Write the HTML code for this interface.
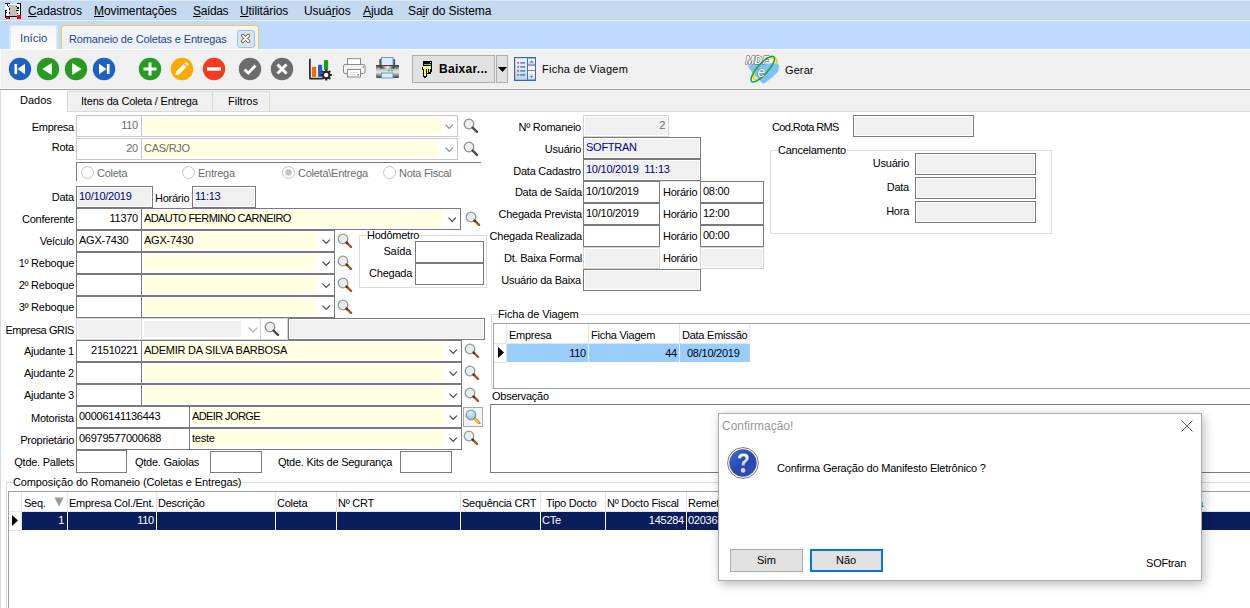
<!DOCTYPE html><html><head><meta charset="utf-8"><style>
*{margin:0;padding:0;box-sizing:border-box}
html,body{width:1250px;height:608px;overflow:hidden}
body{position:relative;background:#fff;font-family:"Liberation Sans",sans-serif;font-size:11px;color:#000;letter-spacing:-0.25px}
.a{position:absolute}
.l,.t{white-space:nowrap}
.bt{position:absolute;top:-1px;white-space:pre}
.tb{border:1px solid #7A7A7A;background:#fff}
.dis{border:1px solid #C8C8C8;background:#fff;color:#6D6D6D}
.ro{border:1px solid #7A7A7A;background:#F0F0F0;box-shadow:inset 0 0 0 1px #fff;color:#000080}
.dis2{border:1px solid #D4D4D4;background:#F0F0F0;box-shadow:inset 0 0 0 1px #fff;color:#6D6D6D}
</style></head><body>
<div class="a" style="left:0px;top:0px;width:1250px;height:19px;background:#C5D9F0"></div>
<div class="a" style="left:0px;top:0px;width:1250px;height:1px;background:#D8E6F5"></div>
<div class="a" style="left:0px;top:19px;width:1250px;height:1px;background:#BBD4EE"></div>
<div class="a" style="left:0px;top:20px;width:1250px;height:1px;background:#EEF0F3"></div>
<div class="a" style="left:0px;top:21px;width:1250px;height:28px;background:#BEDAFE"></div>
<div class="a" style="left:0px;top:49px;width:1250px;height:1px;background:#FCFCFC"></div>
<svg class="a" style="left:5px;top:3px" width="16" height="16" viewBox="0 0 16 16" shape-rendering="crispEdges"><rect x="0" y="1" width="16" height="12" fill="#fff"/><rect x="4" y="2" width="8" height="11" fill="#C0C0C0"/><rect x="0" y="0" width="5" height="1" fill="#000"/><rect x="1" y="0" width="3" height="1" fill="#0000FF"/><rect x="12" y="0" width="4" height="1" fill="#000"/><rect x="13" y="0" width="2" height="1" fill="#0000FF"/><rect x="15" y="1" width="1" height="12" fill="#000"/><rect x="0" y="7" width="1" height="6" fill="#000"/><rect x="2" y="1" width="1" height="2" fill="#000"/><rect x="3" y="3" width="1" height="1" fill="#000"/><rect x="4" y="5" width="1" height="2" fill="#000"/><rect x="4" y="9" width="1" height="2" fill="#000"/><rect x="1" y="7" width="1" height="1" fill="#000"/><rect x="1" y="9" width="1" height="1" fill="#000"/><rect x="11" y="3" width="1" height="1" fill="#000"/><rect x="12" y="4" width="2" height="2" fill="#000"/><rect x="11" y="7" width="3" height="1" fill="#000"/><rect x="12" y="10" width="1" height="1" fill="#000"/><rect x="0" y="13" width="16" height="1" fill="#000"/><rect x="1" y="14" width="3" height="2" fill="#FF0000"/><rect x="12" y="12" width="4" height="4" fill="#FF0000"/><rect x="0" y="14" width="1" height="1" fill="#000"/><rect x="4" y="14" width="1" height="2" fill="#000"/></svg>
<div class="a t" style="left:28px;top:4px;height:15px;line-height:15px;font-size:12px;letter-spacing:-0.1px;color:#000"><u>C</u>adastros</div>
<div class="a t" style="left:94px;top:4px;height:15px;line-height:15px;font-size:12px;letter-spacing:-0.1px;color:#000"><u>M</u>ovimentações</div>
<div class="a t" style="left:193px;top:4px;height:15px;line-height:15px;font-size:12px;letter-spacing:-0.35px;color:#000"><u>S</u>aídas</div>
<div class="a t" style="left:240px;top:4px;height:15px;line-height:15px;font-size:12px;letter-spacing:-0.1px;color:#000"><u>U</u>tilitários</div>
<div class="a t" style="left:304px;top:4px;height:15px;line-height:15px;font-size:12px;letter-spacing:-0.1px;color:#000">Usuá<u>r</u>ios</div>
<div class="a t" style="left:363px;top:4px;height:15px;line-height:15px;font-size:12px;letter-spacing:-0.1px;color:#000"><u>A</u>juda</div>
<div class="a t" style="left:408px;top:4px;height:15px;line-height:15px;font-size:12px;letter-spacing:-0.1px;color:#000">Sa<u>i</u>r do Sistema</div>
<div class="a" style="left:9px;top:25px;width:49px;height:24px;border:1px solid #D8E6F5;border-bottom:none;border-radius:3px 3px 0 0;background:linear-gradient(#F4F4F4,#FFFFFF)"></div>
<div class="a" style="left:10px;top:26px;width:1px;height:23px;background:#C8F0FF"></div>
<div class="a" style="left:56px;top:26px;width:1px;height:23px;background:#C8F0FF"></div>
<div class="a t" style="left:20px;top:31px;height:15px;line-height:15px;font-size:11.5px;color:#2B3E8C;letter-spacing:0">Início</div>
<div class="a" style="left:61px;top:25px;width:198px;height:24px;border:1px solid #F5C65A;border-bottom:none;border-radius:3px 3px 0 0;background:linear-gradient(#F2F5FA,#E9F0FA);box-shadow:inset 1px 1px 0 #FFF8C0,inset -1px 0 0 #FFF8C0"></div>
<div class="a t" style="left:69px;top:32px;height:15px;line-height:15px;font-size:11px;color:#2B3E8C;letter-spacing:-0.15px">Romaneio de Coletas e Entregas</div>
<div class="a" style="left:237px;top:30px;width:18px;height:18px;border:1px solid #A2C0E4;border-radius:3px;background:#D4E3F5"></div>
<svg class="a" style="left:240px;top:33px" width="12" height="12" viewBox="0 0 12 12"><path d="M2.8 2.6L8.4 8.2M8.4 2.6L2.8 8.2" stroke="#6E5C1E" stroke-width="3.6" stroke-linecap="round"/><path d="M2.8 2.6L8.4 8.2M8.4 2.6L2.8 8.2" stroke="#FFFFFF" stroke-width="2" stroke-linecap="round"/></svg>
<div class="a" style="left:0px;top:50px;width:1250px;height:38px;background:#F0F0F0"></div>
<div class="a" style="left:0px;top:50px;width:1px;height:38px;background:#FAFAFA"></div>
<div class="a" style="left:0px;top:88px;width:1250px;height:1px;background:#FAFAFA"></div>
<div class="a" style="left:0px;top:89px;width:1250px;height:1px;background:#A0A0A0"></div>
<div class="a" style="left:0px;top:90px;width:1250px;height:1px;background:#F8F8F8"></div>
<svg class="a" style="left:8px;top:57px" width="24" height="24" viewBox="0 0 24 24"><circle cx="12" cy="12" r="11.2" fill="#1C62C0"/><rect x="6.5" y="7" width="2.6" height="10" fill="#fff"/><path d="M9.5 12 L17 6.8 V17.2Z" fill="#fff"/></svg>
<svg class="a" style="left:36px;top:57px" width="24" height="24" viewBox="0 0 24 24"><circle cx="12" cy="12" r="11.2" fill="#279A22"/><path d="M6.3 12 L15.8 6 V18Z" fill="#fff"/></svg>
<svg class="a" style="left:64px;top:57px" width="24" height="24" viewBox="0 0 24 24"><circle cx="12" cy="12" r="11.2" fill="#279A22"/><path d="M17.7 12 L8.2 6 V18Z" fill="#fff"/></svg>
<svg class="a" style="left:92px;top:57px" width="24" height="24" viewBox="0 0 24 24"><circle cx="12" cy="12" r="11.2" fill="#1C62C0"/><rect x="14.9" y="7" width="2.6" height="10" fill="#fff"/><path d="M14.5 12 L7 6.8 V17.2Z" fill="#fff"/></svg>
<svg class="a" style="left:138px;top:57px" width="24" height="24" viewBox="0 0 24 24"><circle cx="12" cy="12" r="11.2" fill="#259B24"/><rect x="10.5" y="5.5" width="3" height="13" fill="#fff"/><rect x="5.5" y="10.5" width="13" height="3" fill="#fff"/></svg>
<svg class="a" style="left:170px;top:57px" width="24" height="24" viewBox="0 0 24 24"><circle cx="12" cy="12" r="11.2" fill="#FFA900"/><path d="M5.3 18.2 L6.3 14.6 L13.6 7.3 L16.4 10.1 L9.1 17.4Z" fill="#fff"/><path d="M14.6 6.3 L16.2 4.7 L19 7.5 L17.4 9.1Z" fill="#fff"/></svg>
<svg class="a" style="left:202px;top:57px" width="24" height="24" viewBox="0 0 24 24"><circle cx="12" cy="12" r="11.2" fill="#F43B1D"/><rect x="5" y="10.3" width="14" height="3.4" fill="#fff"/></svg>
<svg class="a" style="left:238px;top:57px" width="24" height="24" viewBox="0 0 24 24"><circle cx="12" cy="12" r="11.2" fill="#6C6C6C"/><path d="M6.5 12.5 L10.3 16 L17.5 8.5" fill="none" stroke="#fff" stroke-width="2.8"/></svg>
<svg class="a" style="left:270px;top:57px" width="24" height="24" viewBox="0 0 24 24"><circle cx="12" cy="12" r="11.2" fill="#6C6C6C"/><path d="M7.5 7.5 L16.5 16.5 M16.5 7.5 L7.5 16.5" fill="none" stroke="#fff" stroke-width="3"/></svg>
<svg class="a" style="left:308px;top:58px" width="26" height="24" viewBox="0 0 26 24"><path d="M1.9 0.7 V20.6 H14" fill="none" stroke="#262626" stroke-width="1.7" stroke-linejoin="round"/><rect x="4" y="8.8" width="4.2" height="10.2" rx="1" fill="#FF6600"/><rect x="10" y="6.8" width="4.2" height="12.2" rx="1" fill="#1C62C8"/><rect x="16" y="2" width="4.2" height="10" rx="1" fill="#229A22"/><g transform="translate(18.2 17)"><circle r="4.2" fill="#262626"/><path d="M0 -5.6V5.6M-5.6 0H5.6M-4 -4L4 4M4 -4L-4 4" stroke="#262626" stroke-width="2.2"/><circle r="2.2" fill="#fff"/></g></svg>
<svg class="a" style="left:343px;top:58px" width="23" height="20" viewBox="0 0 23 20"><path d="M3 6.5 L4.5 5 H17.5 L19 6.5" fill="#999"/><rect x="4.5" y="0.7" width="13" height="6" fill="#fff" stroke="#8A8A8A"/><rect x="0.5" y="6.5" width="21.5" height="9" rx="1.6" fill="#F2F2F2" stroke="#8A8A8A"/><rect x="4.5" y="11.5" width="13" height="7.5" fill="#fff" stroke="#8A8A8A"/><path d="M7 14.5h8M6 16.5h6" stroke="#D8D8D8" stroke-width=".8"/><rect x="14.5" y="16" width="1.5" height="1.5" fill="#B04A90"/><rect x="19.5" y="8" width="1.5" height="1.5" fill="#F46A50"/></svg>
<svg class="a" style="left:376px;top:57px" width="23" height="22" viewBox="0 0 23 22"><defs><linearGradient id="pg" x1="0" y1="0" x2="0" y2="1"><stop offset="0" stop-color="#3A3A3A"/><stop offset="0.12" stop-color="#555"/><stop offset="0.3" stop-color="#B8B8B8"/><stop offset="0.55" stop-color="#E8E8E8"/><stop offset="0.8" stop-color="#8A8A8A"/><stop offset="1" stop-color="#3A3A3A"/></linearGradient><linearGradient id="sg" x1="0" y1="0" x2="1" y2="0"><stop offset="0" stop-color="#333"/><stop offset="0.5" stop-color="#EEE"/><stop offset="1" stop-color="#333"/></linearGradient></defs><rect x="3.2" y="2" width="16" height="7" rx="1" fill="#5A5A5A"/><rect x="5.5" y="0.5" width="11.5" height="8" fill="#DDEAF7" stroke="#6A9AD0"/><rect x="0" y="8" width="23" height="13" rx="1.5" fill="url(#pg)"/><rect x="0" y="8" width="23" height="1" fill="#444"/><rect x="4.5" y="9" width="14" height="2.8" fill="url(#sg)"/><rect x="12" y="13" width="2" height="1.3" fill="#2D2"/><rect x="15" y="13" width="2" height="1.3" fill="#2D2"/><rect x="20" y="10.5" width="1.5" height="1" fill="#666"/><rect x="5.5" y="16" width="11.5" height="5" fill="#DDEAF7" stroke="#6A9AD0"/></svg>
<div class="a" style="left:412px;top:55px;width:83px;height:28px;border:1px solid #ADADAD;background:#E1E1E1"></div>
<div class="a" style="left:496px;top:55px;width:12px;height:28px;border:1px solid #ADADAD;background:#E1E1E1"></div>
<svg class="a" style="left:498px;top:67px" width="9" height="5" viewBox="0 0 9 5"><path d="M0 0H9L4.5 5Z" fill="#000"/></svg>
<svg class="a" style="left:422px;top:61px" width="11" height="17" viewBox="0 0 11 17" shape-rendering="crispEdges"><rect x="1" y="0" width="9" height="5" fill="#000"/><rect x="2" y="3" width="7" height="1" fill="#19DDE8"/><rect x="8" y="1" width="1" height="1" fill="#FFF000"/><rect x="0" y="5" width="10" height="8" fill="#000"/><rect x="1" y="8" width="4" height="9" fill="#000"/><rect x="1" y="5" width="8" height="3" fill="#FFF24A"/><rect x="1" y="6" width="1" height="2" fill="#FFF24A"/><rect x="2" y="8" width="2" height="7" fill="#FFF24A"/><rect x="5" y="8" width="1" height="4" fill="#FFF24A"/><rect x="7" y="8" width="1" height="3" fill="#FFF24A"/><rect x="3" y="6" width="1" height="1" fill="#fff"/><rect x="5" y="6" width="1" height="1" fill="#fff"/><rect x="7" y="6" width="1" height="1" fill="#fff"/><rect x="2" y="10" width="1" height="1" fill="#fff"/><rect x="3" y="12" width="1" height="1" fill="#fff"/><rect x="0" y="5" width="1" height="1" fill="#E1E1E1"/><rect x="0" y="9" width="1" height="8" fill="#E1E1E1"/><rect x="5" y="13" width="5" height="4" fill="#E1E1E1"/><rect x="9" y="11" width="1" height="2" fill="#E1E1E1"/><rect x="1" y="16" width="1" height="1" fill="#E1E1E1"/><rect x="4" y="16" width="1" height="1" fill="#E1E1E1"/></svg>
<div class="a t" style="left:439px;top:62px;height:14px;line-height:14px;font-size:12px;font-weight:bold;letter-spacing:0.3px">Baixar...</div>
<svg class="a" style="left:514px;top:57px" width="22" height="24" viewBox="0 0 22 24"><defs><linearGradient id="fg" x1="0" y1="0" x2="0" y2="1"><stop offset="0" stop-color="#F2F7FC"/><stop offset="1" stop-color="#BCD4EE"/></linearGradient><linearGradient id="bg2" x1="0" y1="0" x2="0" y2="1"><stop offset="0" stop-color="#FFFFFF"/><stop offset="1" stop-color="#C8CED6"/></linearGradient></defs><rect x="0.6" y="0.6" width="20.8" height="22.8" fill="url(#fg)" stroke="#3A66A8" stroke-width="1.2"/><rect x="13" y="0.6" width="8.4" height="22.8" fill="#4C72AC"/><rect x="14" y="1.6" width="7" height="6" fill="url(#bg2)"/><rect x="14" y="8.6" width="7" height="4.6" fill="#F4F4F4"/><rect x="14" y="14" width="7" height="3" fill="#F4F4F4"/><rect x="14" y="17.2" width="7" height="5.4" fill="url(#bg2)"/><path d="M15.8 5.6 L17.5 3.6 L19.2 5.6Z" fill="#3A66A8"/><path d="M15.8 18.8 L17.5 20.8 L19.2 18.8Z" fill="#3A66A8"/><g fill="#E02828"><rect x="3" y="5.2" width="2.2" height="1.4" rx=".6"/><rect x="3" y="9.2" width="2.2" height="1.4" rx=".6"/><rect x="3" y="13.2" width="2.2" height="1.4" rx=".6"/><rect x="3" y="17.2" width="2.2" height="1.4" rx=".6"/></g><g fill="#3A64A8"><rect x="6.2" y="5.3" width="5" height="1.2"/><rect x="6.2" y="9.3" width="5" height="1.2"/><rect x="6.2" y="13.3" width="5" height="1.2"/><rect x="6.2" y="17.3" width="5" height="1.2"/></g></svg>
<div class="a t" style="left:542px;top:61px;height:16px;line-height:16px;font-size:11px;letter-spacing:0.25px">Ficha de Viagem</div>
<svg class="a" style="left:745px;top:55px" width="36" height="31" viewBox="0 0 36 31"><path d="M2.9 10.5 L14.5 8.7 L32.4 8.3 L34.2 10.5 L33.2 16.6 L27.4 22.3 L20.2 28.1 L18 28.8 L14.5 25.2 L8 18.7 L4.4 13.7Z" fill="#7CC3F2"/><path d="M25.5 3.2 Q33 1.5 31.5 8" fill="none" stroke="#F2D200" stroke-width="1.8"/><path d="M10 17 Q6 25 13 25.5" fill="none" stroke="#F2D200" stroke-width="1.8"/><text x="0.5" y="8.6" font-family="Liberation Sans" font-weight="bold" font-style="italic" font-size="10.5" letter-spacing="0.3" fill="#fff" stroke="#505050" stroke-width="1.1" paint-order="stroke">MDF</text><ellipse cx="17.8" cy="14.1" rx="5.2" ry="16.6" transform="rotate(42 17.8 14.1)" fill="none" stroke="#16A040" stroke-width="1.5"/><text x="12.5" y="21.5" font-family="Liberation Sans" font-style="italic" font-size="14" fill="#fff" stroke="#606060" stroke-width="0.7" paint-order="stroke">e</text></svg>
<div class="a t" style="left:785px;top:62px;height:16px;line-height:16px;font-size:11px;letter-spacing:0.1px">Gerar</div>
<div class="a" style="left:0px;top:91px;width:1250px;height:21px;background:#F0F0F0"></div>
<div class="a" style="left:0px;top:111px;width:1250px;height:1px;background:#D9D9D9"></div>
<div class="a" style="left:1px;top:90px;width:66px;height:22px;background:#fff"></div>
<div class="a t" style="left:20px;top:93px;height:15px;line-height:15px;letter-spacing:0">Dados</div>
<div class="a" style="left:67px;top:91px;width:146px;height:21px;border:1px solid #D9D9D9;background:#F0F0F0"></div>
<div class="a t" style="left:81px;top:94px;height:15px;line-height:15px;letter-spacing:-0.2px">Itens da Coleta / Entrega</div>
<div class="a" style="left:212px;top:91px;width:58px;height:21px;border:1px solid #D9D9D9;background:#F0F0F0"></div>
<div class="a t" style="left:228px;top:94px;height:15px;line-height:15px;letter-spacing:0">Filtros</div>
<div class="a" style="left:0px;top:91px;width:1px;height:517px;background:#D9D9D9"></div>
<div class="a l" style="right:1176px;top:116px;height:22px;line-height:22px;">Empresa</div>
<div class="a dis" style="left:76px;top:115px;width:66px;height:22px;"><span class="bt" style="right:3px;line-height:20px">110</span></div>
<div class="a" style="left:141px;top:115px;width:317px;height:22px;border:1px solid #C8C8C8;background:#fff"><div class="a" style="left:2px;top:2px;width:297px;height:16px;background:#FFFFE1"></div><svg class="a" style="left:303px;top:8px" width="10" height="6" viewBox="0 0 10 6"><path d="M0.5 0.7 L4.2 4.4 L7.9 0.7" fill="none" stroke="#8A8A8A" stroke-width="1.15"/></svg></div>
<svg class="a" style="left:463px;top:118px" width="16" height="15" viewBox="0 0 16 15"><circle cx="6" cy="6" r="4.8" fill="#EEEEEE" stroke="#8C8C8C" stroke-width="1.3"/><path d="M9.6 9.6 L14 13.8" stroke="#4A4A4A" stroke-width="2.4" stroke-linecap="round"/></svg>
<div class="a l" style="right:1176px;top:136px;height:22px;line-height:22px;">Rota</div>
<div class="a dis" style="left:76px;top:138px;width:66px;height:22px;"><span class="bt" style="right:3px;line-height:20px">20</span></div>
<div class="a" style="left:141px;top:138px;width:317px;height:22px;border:1px solid #C8C8C8;background:#fff"><div class="a" style="left:2px;top:2px;width:294px;height:16px;background:#FFFFE1"></div><span class="bt" style="left:2px;line-height:20px;color:#6D6D6D;">CAS/RJO</span><svg class="a" style="left:303px;top:8px" width="10" height="6" viewBox="0 0 10 6"><path d="M0.5 0.7 L4.2 4.4 L7.9 0.7" fill="none" stroke="#8A8A8A" stroke-width="1.15"/></svg></div>
<style>.cg span{color:#6D6D6D}</style>
<svg class="a" style="left:463px;top:141px" width="16" height="15" viewBox="0 0 16 15"><circle cx="6" cy="6" r="4.8" fill="#EEEEEE" stroke="#8C8C8C" stroke-width="1.3"/><path d="M9.6 9.6 L14 13.8" stroke="#4A4A4A" stroke-width="2.4" stroke-linecap="round"/></svg>
<div class="a" style="left:76px;top:162px;width:405px;height:1px;background:#7A7A7A"></div>
<div class="a" style="left:76px;top:162px;width:1px;height:19px;background:#7A7A7A"></div>
<svg class="a" style="left:81px;top:166px" width="13" height="13" viewBox="0 0 13 13"><circle cx="6.5" cy="6.5" r="6" fill="#fff" stroke="#C4C4C4"/></svg>
<div class="a t" style="left:97px;top:163px;height:20px;line-height:20px;color:#6D6D6D">Coleta</div>
<svg class="a" style="left:182px;top:166px" width="13" height="13" viewBox="0 0 13 13"><circle cx="6.5" cy="6.5" r="6" fill="#fff" stroke="#C4C4C4"/></svg>
<div class="a t" style="left:198px;top:163px;height:20px;line-height:20px;color:#6D6D6D">Entrega</div>
<svg class="a" style="left:282px;top:166px" width="13" height="13" viewBox="0 0 13 13"><circle cx="6.5" cy="6.5" r="6" fill="#fff" stroke="#C4C4C4"/><circle cx="6.5" cy="6.5" r="3.3" fill="#C4C4C4"/></svg>
<div class="a t" style="left:298px;top:163px;height:20px;line-height:20px;color:#6D6D6D">Coleta\Entrega</div>
<svg class="a" style="left:383px;top:166px" width="13" height="13" viewBox="0 0 13 13"><circle cx="6.5" cy="6.5" r="6" fill="#fff" stroke="#C4C4C4"/></svg>
<div class="a t" style="left:399px;top:163px;height:20px;line-height:20px;color:#6D6D6D">Nota Fiscal</div>
<div class="a l" style="right:1176px;top:186px;height:22px;line-height:22px;">Data</div>
<div class="a ro" style="left:76px;top:186px;width:77px;height:22px;"><span class="bt" style="left:2px;line-height:20px">10/10/2019</span></div>
<div class="a t" style="left:155px;top:187px;height:22px;line-height:22px;">Horário</div>
<div class="a ro" style="left:192px;top:186px;width:64px;height:22px;"><span class="bt" style="left:2px;line-height:20px">11:13</span></div>
<div class="a l" style="right:1176px;top:208px;height:22px;line-height:22px;">Conferente</div>
<div class="a tb" style="left:76px;top:208px;width:66px;height:22px;"><span class="bt" style="right:3px;line-height:20px">11370</span></div>
<div class="a" style="left:141px;top:208px;width:320px;height:22px;border:1px solid #7A7A7A;background:#fff"><div class="a" style="left:2px;top:2px;width:298px;height:16px;background:#FFFFE1"></div><span class="bt" style="left:2px;line-height:20px;color:#000;letter-spacing:-0.6px">ADAUTO FERMINO CARNEIRO</span><svg class="a" style="left:306px;top:8px" width="10" height="6" viewBox="0 0 10 6"><path d="M0.5 0.7 L4.2 4.4 L7.9 0.7" fill="none" stroke="#444" stroke-width="1.15"/></svg></div>
<svg class="a" style="left:465px;top:211px" width="16" height="15" viewBox="0 0 16 15"><circle cx="6" cy="6" r="4.8" fill="#E8ECEC" stroke="#8A9A9A" stroke-width="1.3"/><path d="M9.4 9.4 L14 13.8" stroke="#A9531F" stroke-width="2.4" stroke-linecap="round"/><path d="M9.2 9.2 L10.6 10.6" stroke="#4A3020" stroke-width="2.2"/></svg>
<div class="a l" style="right:1176px;top:230px;height:22px;line-height:22px;">Veículo</div>
<div class="a tb" style="left:76px;top:230px;width:66px;height:22px;"><span class="bt" style="left:2px;line-height:20px">AGX-7430</span></div>
<div class="a" style="left:141px;top:230px;width:194px;height:22px;border:1px solid #7A7A7A;background:#fff"><div class="a" style="left:2px;top:2px;width:172px;height:16px;background:#FFFFE1"></div><span class="bt" style="left:2px;line-height:20px;color:#000;">AGX-7430</span><svg class="a" style="left:180px;top:8px" width="10" height="6" viewBox="0 0 10 6"><path d="M0.5 0.7 L4.2 4.4 L7.9 0.7" fill="none" stroke="#444" stroke-width="1.15"/></svg></div>
<svg class="a" style="left:337px;top:233px" width="16" height="15" viewBox="0 0 16 15"><circle cx="6" cy="6" r="4.8" fill="#E8ECEC" stroke="#8A9A9A" stroke-width="1.3"/><path d="M9.4 9.4 L14 13.8" stroke="#A9531F" stroke-width="2.4" stroke-linecap="round"/><path d="M9.2 9.2 L10.6 10.6" stroke="#4A3020" stroke-width="2.2"/></svg>
<div class="a l" style="right:1176px;top:252px;height:22px;line-height:22px;">1º Reboque</div>
<div class="a tb" style="left:76px;top:252px;width:66px;height:22px;"></div>
<div class="a" style="left:141px;top:252px;width:194px;height:22px;border:1px solid #7A7A7A;background:#fff"><div class="a" style="left:2px;top:2px;width:172px;height:16px;background:#FFFFE1"></div><svg class="a" style="left:180px;top:8px" width="10" height="6" viewBox="0 0 10 6"><path d="M0.5 0.7 L4.2 4.4 L7.9 0.7" fill="none" stroke="#444" stroke-width="1.15"/></svg></div>
<svg class="a" style="left:337px;top:255px" width="16" height="15" viewBox="0 0 16 15"><circle cx="6" cy="6" r="4.8" fill="#E8ECEC" stroke="#8A9A9A" stroke-width="1.3"/><path d="M9.4 9.4 L14 13.8" stroke="#A9531F" stroke-width="2.4" stroke-linecap="round"/><path d="M9.2 9.2 L10.6 10.6" stroke="#4A3020" stroke-width="2.2"/></svg>
<div class="a l" style="right:1176px;top:274px;height:22px;line-height:22px;">2º Reboque</div>
<div class="a tb" style="left:76px;top:274px;width:66px;height:22px;"></div>
<div class="a" style="left:141px;top:274px;width:194px;height:22px;border:1px solid #7A7A7A;background:#fff"><div class="a" style="left:2px;top:2px;width:172px;height:16px;background:#FFFFE1"></div><svg class="a" style="left:180px;top:8px" width="10" height="6" viewBox="0 0 10 6"><path d="M0.5 0.7 L4.2 4.4 L7.9 0.7" fill="none" stroke="#444" stroke-width="1.15"/></svg></div>
<svg class="a" style="left:337px;top:277px" width="16" height="15" viewBox="0 0 16 15"><circle cx="6" cy="6" r="4.8" fill="#E8ECEC" stroke="#8A9A9A" stroke-width="1.3"/><path d="M9.4 9.4 L14 13.8" stroke="#A9531F" stroke-width="2.4" stroke-linecap="round"/><path d="M9.2 9.2 L10.6 10.6" stroke="#4A3020" stroke-width="2.2"/></svg>
<div class="a l" style="right:1176px;top:296px;height:22px;line-height:22px;">3º Reboque</div>
<div class="a tb" style="left:76px;top:296px;width:66px;height:22px;"></div>
<div class="a" style="left:141px;top:296px;width:194px;height:22px;border:1px solid #7A7A7A;background:#fff"><div class="a" style="left:2px;top:2px;width:172px;height:16px;background:#FFFFE1"></div><svg class="a" style="left:180px;top:8px" width="10" height="6" viewBox="0 0 10 6"><path d="M0.5 0.7 L4.2 4.4 L7.9 0.7" fill="none" stroke="#444" stroke-width="1.15"/></svg></div>
<svg class="a" style="left:337px;top:299px" width="16" height="15" viewBox="0 0 16 15"><circle cx="6" cy="6" r="4.8" fill="#E8ECEC" stroke="#8A9A9A" stroke-width="1.3"/><path d="M9.4 9.4 L14 13.8" stroke="#A9531F" stroke-width="2.4" stroke-linecap="round"/><path d="M9.2 9.2 L10.6 10.6" stroke="#4A3020" stroke-width="2.2"/></svg>
<div class="a l" style="right:1176px;top:319px;height:22px;line-height:22px;letter-spacing:-0.45px">Empresa GRIS</div>
<div class="a dis2" style="left:76px;top:318px;width:66px;height:22px;"></div>
<div class="a" style="left:141px;top:318px;width:120px;height:22px;border:1px solid #D4D4D4;background:#fff"><div class="a" style="left:2px;top:2px;width:97px;height:16px;background:#F0F0F0"></div><svg class="a" style="left:106px;top:8px" width="10" height="6" viewBox="0 0 10 6"><path d="M0.5 0.5 L5 5 L9.5 0.5" fill="none" stroke="#B0B0B0" stroke-width="1.1"/></svg></div>
<div class="a" style="left:260px;top:318px;width:28px;height:22px;border:1px solid #D4D4D4;background:#fff"></div>
<svg class="a" style="left:264px;top:321px" width="16" height="15" viewBox="0 0 16 15"><circle cx="6" cy="6" r="4.8" fill="#EEEEEE" stroke="#8C8C8C" stroke-width="1.3"/><path d="M9.6 9.6 L14 13.8" stroke="#4A4A4A" stroke-width="2.4" stroke-linecap="round"/></svg>
<div class="a ro" style="left:288px;top:318px;width:197px;height:22px;"></div>
<div class="a l" style="right:1176px;top:340px;height:22px;line-height:22px;">Ajudante 1</div>
<div class="a tb" style="left:76px;top:340px;width:66px;height:22px;"><span class="bt" style="right:3px;line-height:20px">21510221</span></div>
<div class="a" style="left:141px;top:340px;width:321px;height:22px;border:1px solid #7A7A7A;background:#fff"><div class="a" style="left:2px;top:2px;width:299px;height:16px;background:#FFFFE1"></div><span class="bt" style="left:2px;line-height:20px;color:#000;">ADEMIR DA SILVA BARBOSA</span><svg class="a" style="left:307px;top:8px" width="10" height="6" viewBox="0 0 10 6"><path d="M0.5 0.7 L4.2 4.4 L7.9 0.7" fill="none" stroke="#444" stroke-width="1.15"/></svg></div>
<svg class="a" style="left:464px;top:343px" width="16" height="15" viewBox="0 0 16 15"><circle cx="6" cy="6" r="4.8" fill="#E8ECEC" stroke="#8A9A9A" stroke-width="1.3"/><path d="M9.4 9.4 L14 13.8" stroke="#A9531F" stroke-width="2.4" stroke-linecap="round"/><path d="M9.2 9.2 L10.6 10.6" stroke="#4A3020" stroke-width="2.2"/></svg>
<div class="a l" style="right:1176px;top:362px;height:22px;line-height:22px;">Ajudante 2</div>
<div class="a tb" style="left:76px;top:362px;width:66px;height:22px;"></div>
<div class="a" style="left:141px;top:362px;width:321px;height:22px;border:1px solid #7A7A7A;background:#fff"><div class="a" style="left:2px;top:2px;width:299px;height:16px;background:#FFFFE1"></div><svg class="a" style="left:307px;top:8px" width="10" height="6" viewBox="0 0 10 6"><path d="M0.5 0.7 L4.2 4.4 L7.9 0.7" fill="none" stroke="#444" stroke-width="1.15"/></svg></div>
<svg class="a" style="left:464px;top:365px" width="16" height="15" viewBox="0 0 16 15"><circle cx="6" cy="6" r="4.8" fill="#E8ECEC" stroke="#8A9A9A" stroke-width="1.3"/><path d="M9.4 9.4 L14 13.8" stroke="#A9531F" stroke-width="2.4" stroke-linecap="round"/><path d="M9.2 9.2 L10.6 10.6" stroke="#4A3020" stroke-width="2.2"/></svg>
<div class="a l" style="right:1176px;top:384px;height:22px;line-height:22px;">Ajudante 3</div>
<div class="a tb" style="left:76px;top:384px;width:66px;height:22px;"></div>
<div class="a" style="left:141px;top:384px;width:321px;height:22px;border:1px solid #7A7A7A;background:#fff"><div class="a" style="left:2px;top:2px;width:299px;height:16px;background:#FFFFE1"></div><svg class="a" style="left:307px;top:8px" width="10" height="6" viewBox="0 0 10 6"><path d="M0.5 0.7 L4.2 4.4 L7.9 0.7" fill="none" stroke="#444" stroke-width="1.15"/></svg></div>
<svg class="a" style="left:464px;top:387px" width="16" height="15" viewBox="0 0 16 15"><circle cx="6" cy="6" r="4.8" fill="#E8ECEC" stroke="#8A9A9A" stroke-width="1.3"/><path d="M9.4 9.4 L14 13.8" stroke="#A9531F" stroke-width="2.4" stroke-linecap="round"/><path d="M9.2 9.2 L10.6 10.6" stroke="#4A3020" stroke-width="2.2"/></svg>
<div class="a l" style="right:1176px;top:407px;height:22px;line-height:22px;">Motorista</div>
<div class="a tb" style="left:76px;top:406px;width:114px;height:22px;"><span class="bt" style="left:2px;line-height:20px">00006141136443</span></div>
<div class="a" style="left:189px;top:406px;width:273px;height:22px;border:1px solid #7A7A7A;background:#fff"><div class="a" style="left:2px;top:2px;width:251px;height:16px;background:#FFFFE1"></div><span class="bt" style="left:2px;line-height:20px;color:#000;letter-spacing:-0.6px">ADEIR JORGE</span><svg class="a" style="left:259px;top:8px" width="10" height="6" viewBox="0 0 10 6"><path d="M0.5 0.7 L4.2 4.4 L7.9 0.7" fill="none" stroke="#444" stroke-width="1.15"/></svg></div>
<div class="a" style="left:463px;top:407px;width:20px;height:20px;border:1px solid #A9A9A9;background:#F4F4F4"></div>
<svg class="a" style="left:465px;top:409px" width="16" height="15" viewBox="0 0 16 15"><defs><radialGradient id="hg" cx="0.4" cy="0.3" r="0.7"><stop offset="0" stop-color="#E8F4FF"/><stop offset="1" stop-color="#7FBFF5"/></radialGradient></defs><circle cx="6" cy="6" r="4.8" fill="url(#hg)" stroke="#8A9AAA" stroke-width="1.3"/><path d="M9.6 9.6 L14.2 14" stroke="#C88A10" stroke-width="2.8" stroke-linecap="round"/><path d="M10 10 L13.8 13.6" stroke="#FFD84A" stroke-width="1.2" stroke-linecap="round"/></svg>
<div class="a l" style="right:1176px;top:429px;height:22px;line-height:22px;">Proprietário</div>
<div class="a tb" style="left:76px;top:428px;width:114px;height:22px;"><span class="bt" style="left:2px;line-height:20px">06979577000688</span></div>
<div class="a" style="left:189px;top:428px;width:273px;height:22px;border:1px solid #7A7A7A;background:#fff"><div class="a" style="left:2px;top:2px;width:251px;height:16px;background:#FFFFE1"></div><span class="bt" style="left:2px;line-height:20px;color:#000;">teste</span><svg class="a" style="left:259px;top:8px" width="10" height="6" viewBox="0 0 10 6"><path d="M0.5 0.7 L4.2 4.4 L7.9 0.7" fill="none" stroke="#444" stroke-width="1.15"/></svg></div>
<svg class="a" style="left:463px;top:430px" width="16" height="15" viewBox="0 0 16 15"><circle cx="6" cy="6" r="4.8" fill="#E8ECEC" stroke="#8A9A9A" stroke-width="1.3"/><path d="M9.4 9.4 L14 13.8" stroke="#A9531F" stroke-width="2.4" stroke-linecap="round"/><path d="M9.2 9.2 L10.6 10.6" stroke="#4A3020" stroke-width="2.2"/></svg>
<div class="a l" style="right:1176px;top:451px;height:22px;line-height:22px;">Qtde. Pallets</div>
<div class="a tb" style="left:76px;top:450px;width:51px;height:23px;"></div>
<div class="a t" style="left:135px;top:451px;height:22px;line-height:22px;">Qtde. Gaiolas</div>
<div class="a tb" style="left:210px;top:451px;width:52px;height:22px;"></div>
<div class="a t" style="left:278px;top:451px;height:22px;line-height:22px;">Qtde. Kits de Segurança</div>
<div class="a tb" style="left:400px;top:451px;width:52px;height:22px;"></div>
<div class="a" style="left:359px;top:235px;width:128px;height:53px;border:1px solid #DCDCDC;border-top:none;"></div>
<div class="a" style="left:359px;top:228px;width:128px;height:15px;display:flex;align-items:flex-start"><div style="width:8px;height:1px;margin-top:7px;background:#DCDCDC;flex:none"></div><div class="t" style="line-height:14px;padding:0 1px 0 0;letter-spacing:-0.25px">Hodômetro</div><div style="flex:1;height:1px;margin-top:7px;background:#DCDCDC"></div></div>
<div class="a l" style="right:839px;top:240px;height:22px;line-height:22px;">Saída</div>
<div class="a tb" style="left:415px;top:241px;width:69px;height:22px;"></div>
<div class="a l" style="right:838px;top:262px;height:22px;line-height:22px;">Chegada</div>
<div class="a tb" style="left:415px;top:263px;width:69px;height:22px;"></div>
<div class="a l" style="right:669px;top:116px;height:22px;line-height:22px;">Nº Romaneio</div>
<div class="a dis2" style="left:583px;top:115px;width:86px;height:22px;"><span class="bt" style="right:3px;line-height:20px">2</span></div>
<div class="a l" style="right:669px;top:138px;height:22px;line-height:22px;">Usuário</div>
<div class="a ro" style="left:583px;top:137px;width:118px;height:22px;"><span class="bt" style="left:2px;line-height:20px">SOFTRAN</span></div>
<div class="a l" style="right:669px;top:160px;height:22px;line-height:22px;">Data Cadastro</div>
<div class="a ro" style="left:583px;top:159px;width:118px;height:22px;"><span class="bt" style="left:2px;line-height:20px">10/10/2019  11:13</span></div>
<div class="a" style="left:660px;top:181px;width:41px;height:110px;border-top:1px solid #E4E4E4"></div>
<div class="a l" style="right:668px;top:181px;height:22px;line-height:22px;">Data de Saída</div>
<div class="a tb" style="left:583px;top:181px;width:77px;height:22px;"><span class="bt" style="left:2px;line-height:20px">10/10/2019</span></div>
<div class="a t" style="left:663px;top:181px;height:22px;line-height:22px;">Horário</div>
<div class="a tb" style="left:700px;top:181px;width:64px;height:22px;"><span class="bt" style="left:2px;line-height:20px">08:00</span></div>
<div class="a l" style="right:668px;top:203px;height:22px;line-height:22px;">Chegada Prevista</div>
<div class="a tb" style="left:583px;top:203px;width:77px;height:22px;"><span class="bt" style="left:2px;line-height:20px">10/10/2019</span></div>
<div class="a t" style="left:663px;top:203px;height:22px;line-height:22px;">Horário</div>
<div class="a tb" style="left:700px;top:203px;width:64px;height:22px;"><span class="bt" style="left:2px;line-height:20px">12:00</span></div>
<div class="a l" style="right:668px;top:225px;height:22px;line-height:22px;">Chegada Realizada</div>
<div class="a tb" style="left:583px;top:225px;width:77px;height:22px;"></div>
<div class="a t" style="left:663px;top:225px;height:22px;line-height:22px;">Horário</div>
<div class="a tb" style="left:700px;top:225px;width:64px;height:22px;"><span class="bt" style="left:2px;line-height:20px">00:00</span></div>
<div class="a l" style="right:668px;top:247px;height:22px;line-height:22px;">Dt. Baixa Formal</div>
<div class="a dis2" style="left:583px;top:247px;width:77px;height:22px;"></div>
<div class="a t" style="left:663px;top:247px;height:22px;line-height:22px;">Horário</div>
<div class="a dis2" style="left:700px;top:247px;width:64px;height:22px;"></div>
<div class="a l" style="right:669px;top:269px;height:22px;line-height:22px;">Usuário da Baixa</div>
<div class="a ro" style="left:583px;top:269px;width:118px;height:22px;"></div>
<div class="a t" style="left:772px;top:116px;height:22px;line-height:22px;letter-spacing:-0.6px">Cod.Rota RMS</div>
<div class="a ro" style="left:853px;top:115px;width:121px;height:22px;"></div>
<div class="a" style="left:770px;top:150px;width:282px;height:84px;border:1px solid #DCDCDC;border-top:none;"></div>
<div class="a" style="left:770px;top:143px;width:282px;height:15px;display:flex;align-items:flex-start"><div style="width:8px;height:1px;margin-top:7px;background:#DCDCDC;flex:none"></div><div class="t" style="line-height:14px;padding:0 1px 0 0;letter-spacing:-0.25px">Cancelamento</div><div style="flex:1;height:1px;margin-top:7px;background:#DCDCDC"></div></div>
<div class="a l" style="right:341px;top:152px;height:22px;line-height:22px;">Usuário</div>
<div class="a ro" style="left:915px;top:153px;width:121px;height:22px;"></div>
<div class="a l" style="right:341px;top:176px;height:22px;line-height:22px;">Data</div>
<div class="a ro" style="left:915px;top:177px;width:121px;height:22px;"></div>
<div class="a l" style="right:341px;top:200px;height:22px;line-height:22px;">Hora</div>
<div class="a ro" style="left:915px;top:201px;width:121px;height:22px;"></div>
<div class="a" style="left:491px;top:314px;width:770px;height:75px;border:1px solid #DCDCDC;border-top:none;"></div>
<div class="a" style="left:491px;top:307px;width:770px;height:15px;display:flex;align-items:flex-start"><div style="width:7px;height:1px;margin-top:7px;background:#DCDCDC;flex:none"></div><div class="t" style="line-height:14px;padding:0 1px 0 0;letter-spacing:-0.12px">Ficha de Viagem</div><div style="flex:1;height:1px;margin-top:7px;background:#DCDCDC"></div></div>
<div class="a" style="left:493px;top:323px;width:760px;height:66px;border:1px solid #A0A0A0;border-right:none;background:#fff"></div>
<div class="a" style="left:588px;top:324px;width:1px;height:20px;background:#E4E4E4"></div>
<div class="a t" style="left:509px;top:325px;height:20px;line-height:20px;">Empresa</div>
<div class="a" style="left:679px;top:324px;width:1px;height:20px;background:#E4E4E4"></div>
<div class="a t" style="left:591px;top:325px;height:20px;line-height:20px;">Ficha Viagem</div>
<div class="a" style="left:749px;top:324px;width:1px;height:20px;background:#E4E4E4"></div>
<div class="a t" style="left:682px;top:325px;height:20px;line-height:20px;">Data Emissão</div>
<div class="a" style="left:494px;top:343px;width:256px;height:1px;background:#E4E4E4"></div>
<div class="a" style="left:507px;top:344px;width:243px;height:18px;background:#99CCFF"></div>
<div class="a" style="left:588px;top:344px;width:1px;height:18px;background:#E8F2FF"></div>
<div class="a" style="left:679px;top:344px;width:1px;height:18px;background:#E8F2FF"></div>
<svg class="a" style="left:498px;top:347px" width="6" height="11" viewBox="0 0 6 11"><path d="M0 0L6 5.5L0 11Z" fill="#000"/></svg>
<div class="a t" style="right:664px;top:344px;line-height:19px">110</div>
<div class="a t" style="right:573px;top:344px;line-height:19px">44</div>
<div class="a t" style="left:687px;top:344px;height:19px;line-height:19px;">08/10/2019</div>
<div class="a" style="left:494px;top:362px;width:13px;height:1px;background:#E4E4E4"></div>
<div class="a" style="left:506px;top:324px;width:1px;height:38px;background:#E4E4E4"></div>
<div class="a t" style="left:492px;top:389px;height:14px;line-height:14px;">Observação</div>
<div class="a" style="left:490px;top:404px;width:760px;height:69px;border:1px solid #7A7A7A;border-right:none;background:#fff"></div>
<div class="a" style="left:6px;top:482px;width:1255px;height:139px;border:1px solid #DCDCDC;border-top:none;"></div>
<div class="a" style="left:6px;top:475px;width:1255px;height:15px;display:flex;align-items:flex-start"><div style="width:7px;height:1px;margin-top:7px;background:#DCDCDC;flex:none"></div><div class="t" style="line-height:14px;padding:0 1px 0 0;letter-spacing:-0.12px">Composição do Romaneio (Coletas e Entregas)</div><div style="flex:1;height:1px;margin-top:7px;background:#DCDCDC"></div></div>
<div class="a" style="left:8px;top:491px;width:1242px;height:117px;border:1px solid #A0A0A0;border-right:none;border-bottom:none;background:#fff"></div>
<div class="a" style="left:67px;top:492px;width:1px;height:20px;background:#E4E4E4"></div>
<div class="a t" style="left:24px;top:493px;height:20px;line-height:20px;">Seq.</div>
<div class="a" style="left:156px;top:492px;width:1px;height:20px;background:#E4E4E4"></div>
<div class="a t" style="left:69px;top:493px;height:20px;line-height:20px;">Empresa Col./Ent.</div>
<div class="a" style="left:275px;top:492px;width:1px;height:20px;background:#E4E4E4"></div>
<div class="a t" style="left:158px;top:493px;height:20px;line-height:20px;">Descrição</div>
<div class="a" style="left:336px;top:492px;width:1px;height:20px;background:#E4E4E4"></div>
<div class="a t" style="left:277px;top:493px;height:20px;line-height:20px;">Coleta</div>
<div class="a" style="left:460px;top:492px;width:1px;height:20px;background:#E4E4E4"></div>
<div class="a t" style="left:338px;top:493px;height:20px;line-height:20px;">Nº CRT</div>
<div class="a" style="left:540px;top:492px;width:1px;height:20px;background:#E4E4E4"></div>
<div class="a t" style="left:462px;top:493px;height:20px;line-height:20px;">Sequência CRT</div>
<div class="a" style="left:605px;top:492px;width:1px;height:20px;background:#E4E4E4"></div>
<div class="a t" style="left:546px;top:493px;height:20px;line-height:20px;">Tipo Docto</div>
<div class="a" style="left:686px;top:492px;width:1px;height:20px;background:#E4E4E4"></div>
<div class="a t" style="left:607px;top:493px;height:20px;line-height:20px;">Nº Docto Fiscal</div>
<div class="a t" style="left:688px;top:493px;height:20px;line-height:20px;">Remetente</div>
<div class="a t" style="left:1166px;top:493px;height:20px;line-height:20px;">Entrega</div>
<div class="a" style="left:9px;top:511px;width:1241px;height:1px;background:#E4E4E4"></div>
<svg class="a" style="left:54px;top:497px" width="10" height="10" viewBox="0 0 10 10"><path d="M0.5 0.5H9.5L5 9.5Z" fill="#9A9A9A"/></svg>
<div class="a" style="left:22px;top:512px;width:1228px;height:18px;background:#0A1E5E"></div>
<div class="a" style="left:67px;top:512px;width:1px;height:18px;background:#fff"></div>
<div class="a" style="left:156px;top:512px;width:1px;height:18px;background:#fff"></div>
<div class="a" style="left:275px;top:512px;width:1px;height:18px;background:#fff"></div>
<div class="a" style="left:336px;top:512px;width:1px;height:18px;background:#fff"></div>
<div class="a" style="left:460px;top:512px;width:1px;height:18px;background:#fff"></div>
<div class="a" style="left:540px;top:512px;width:1px;height:18px;background:#fff"></div>
<div class="a" style="left:605px;top:512px;width:1px;height:18px;background:#fff"></div>
<div class="a" style="left:686px;top:512px;width:1px;height:18px;background:#fff"></div>
<svg class="a" style="left:12px;top:515px" width="6" height="11" viewBox="0 0 6 11"><path d="M0 0L6 5.5L0 11Z" fill="#000"/></svg>
<div class="a t" style="right:1186px;top:511px;line-height:19px;color:#fff">1</div>
<div class="a t" style="right:1096px;top:511px;line-height:19px;color:#fff">110</div>
<div class="a t" style="left:542px;top:511px;height:19px;line-height:19px;color:#fff">CTe</div>
<div class="a t" style="right:566px;top:511px;line-height:19px;color:#fff">145284</div>
<div class="a t" style="left:688px;top:511px;height:19px;line-height:19px;color:#fff">02036</div>
<div class="a" style="left:9px;top:530px;width:13px;height:1px;background:#E4E4E4"></div>
<div class="a" style="left:21px;top:492px;width:1px;height:38px;background:#E4E4E4"></div>
<div class="a" style="left:718px;top:413px;width:484px;height:168px;background:#fff;border:1px solid #AAAAAA;box-shadow:2px 3px 10px rgba(0,0,0,.28)"></div>
<div class="a t" style="left:722px;top:417px;height:18px;line-height:18px;font-size:12px;color:#9A9A9A;letter-spacing:0">Confirmação!</div>
<svg class="a" style="left:1181px;top:420px" width="12" height="12" viewBox="0 0 12 12"><path d="M0.5 0.5L11.5 11.5M11.5 0.5L0.5 11.5" stroke="#666" stroke-width="1"/></svg>
<svg class="a" style="left:727px;top:447px" width="32" height="32" viewBox="0 0 32 32"><defs><linearGradient id="qg" x1="0" y1="0" x2="1" y2="1"><stop offset="0" stop-color="#3F6FD8"/><stop offset="0.5" stop-color="#2448B4"/><stop offset="1" stop-color="#3050C0"/></linearGradient><linearGradient id="qw" x1="0" y1="0" x2="0" y2="1"><stop offset="0" stop-color="#FFFFFF"/><stop offset="1" stop-color="#C8C8C8"/></linearGradient></defs><circle cx="16" cy="16" r="15.4" fill="#fff" stroke="#6A6A6A" stroke-width="0.9"/><circle cx="16" cy="16" r="13.4" fill="url(#qg)" stroke="#3A4A70" stroke-width="0.6"/><path d="M11 11.2 Q11 6.6 16.4 6.6 Q21.8 6.6 21.8 11 Q21.8 13.8 18.8 15.4 Q17.6 16.1 17.6 18.6 H14.6 Q14.4 14.9 16.9 13.6 Q18.6 12.7 18.6 11.1 Q18.6 9.3 16.4 9.3 Q14.2 9.3 14 11.6Z" fill="url(#qw)"/><circle cx="16.1" cy="23.4" r="2.3" fill="#D8D8D8"/></svg>
<div class="a t" style="left:777px;top:459px;height:18px;line-height:18px;font-size:11px;letter-spacing:-0.2px">Confirma Geração do Manifesto Eletrônico ?</div>
<div class="a" style="left:730px;top:549px;width:73px;height:23px;border:1px solid #ADADAD;background:#E1E1E1"></div>
<div class="a t" style="left:757px;top:551px;height:18px;line-height:18px;letter-spacing:0">Sim</div>
<div class="a" style="left:810px;top:549px;width:73px;height:23px;border:2px solid #0078D7;background:#E1E1E1"></div>
<div class="a t" style="left:836px;top:551px;height:18px;line-height:18px;letter-spacing:0">Não</div>
<div class="a t" style="left:1146px;top:554px;height:18px;line-height:18px;letter-spacing:-0.2px">SOFtran</div>
</body></html>
